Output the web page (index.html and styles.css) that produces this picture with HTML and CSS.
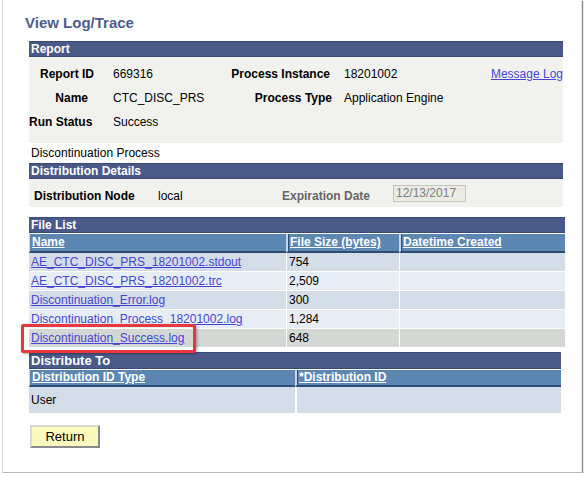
FILE: index.html
```html
<!DOCTYPE html>
<html>
<head>
<meta charset="utf-8">
<link rel="stylesheet" href="styles.css">
</head>
<body>
<div class="frame">
  <h1 class="title">View Log/Trace</h1>

  <section class="report">
    <div class="bar">Report</div>
    <div class="report-body">
      <div class="lbl l1">Report ID</div>
      <div class="val">669316</div>
      <div class="lbl l2">Process Instance</div>
      <div class="val">18201002</div>
      <div class="link-cell"><a href="#">Message Log</a></div>

      <div class="lbl l1 name">Name</div>
      <div class="val">CTC_DISC_PRS</div>
      <div class="lbl l2 ptype">Process Type</div>
      <div class="val">Application Engine</div>
      <div></div>

      <div class="lbl l1 rstat">Run Status</div>
      <div class="val">Success</div>
      <div></div><div></div><div></div>
    </div>
  </section>

  <div class="desc">Discontinuation Process</div>

  <section class="dist">
    <div class="bar">Distribution Details</div>
    <div class="dist-body">
      <span class="lbl dn">Distribution Node</span>
      <span class="val local">local</span>
      <span class="lbl exp">Expiration Date</span>
      <span class="datebox">12/13/2017</span>
    </div>
  </section>

  <section class="files">
    <div class="bar">File List</div>
    <div class="grid file-grid">
      <div class="th"><a href="#">Name</a></div>
      <div class="th"><a href="#">File Size (bytes)</a></div>
      <div class="th"><a href="#">Datetime Created</a></div>

      <div class="td dark"><a href="#">AE_CTC_DISC_PRS_18201002.stdout</a></div>
      <div class="td dark">754</div>
      <div class="td dark"></div>

      <div class="td light"><a href="#">AE_CTC_DISC_PRS_18201002.trc</a></div>
      <div class="td light">2,509</div>
      <div class="td light"></div>

      <div class="td dark"><a href="#">Discontinuation_Error.log</a></div>
      <div class="td dark">300</div>
      <div class="td dark"></div>

      <div class="td light"><a href="#">Discontinuation_Process_18201002.log</a></div>
      <div class="td light">1,284</div>
      <div class="td light"></div>

      <div class="td sel hl-cell"><a href="#">Discontinuation_Success.log</a><span class="hl-box"></span></div>
      <div class="td sel">648</div>
      <div class="td sel"></div>
    </div>
  </section>

  <section class="distto">
    <div class="bar">Distribute To</div>
    <div class="grid to-grid">
      <div class="th"><a href="#">Distribution ID Type</a></div>
      <div class="th"><a href="#">*Distribution ID</a></div>
      <div class="td dark tall">User</div>
      <div class="td dark tall"></div>
    </div>
  </section>

  <button class="btn" type="button">Return</button>
</div>
</body>
</html>
```

FILE: styles.css
```css
html, body {
  margin: 0;
  padding: 0;
  background: #ffffff;
}

body {
  font-family: "Liberation Sans", Arial, sans-serif;
  font-size: 12px;
  color: #000;
}

a {
  color: #4646d2;
  text-decoration: underline;
}

.frame {
  margin-left: 2px;
  width: 580px;
  height: 473px;
  box-sizing: border-box;
  border-left: 1px solid #d4d4d4;
  border-right: 1px solid #e0e0e0;
  border-bottom: 1px solid #b8b8b8;
  box-shadow: 1px 1px 1px #8a8a8a;
  padding: 14px 0 0 26px;
  position: relative;
}

.title {
  margin: 0 0 0 -4px;
  font-size: 15px;
  line-height: 18px;
  font-weight: bold;
  color: #4c5d8c;
  height: 18px;
}

.bar {
  background: #4a5a88;
  border: 1px solid #3b4a75;
  border-left: none;
  border-right: none;
  box-sizing: border-box;
  height: 16px;
  color: #fff;
  font-weight: bold;
  font-size: 12px;
  line-height: 14px;
  padding-left: 2px;
}

.report {
  margin-top: 9px;
  width: 534px;
}

.report-body {
  background: #f1f2ee;
  height: 86px;
  box-sizing: border-box;
  padding-top: 5px;
  display: grid;
  grid-template-columns: 84px 100px 131px 140px 1fr;
  grid-auto-rows: 24px;
  align-items: center;
}

.lbl {
  font-weight: bold;
}

.l1 {
  text-align: right;
  padding-right: 19px;
}

.l1.name {
  padding-right: 25px;
}

.l1.rstat {
  text-align: left;
  padding-right: 0;
  white-space: nowrap;
}

.l2 {
  text-align: right;
  padding-right: 14px;
}

.l2.ptype {
  padding-right: 12px;
}

.link-cell {
  text-align: right;
}

.desc {
  height: 20px;
  line-height: 20px;
  padding-left: 2px;
}

.dist {
  width: 534px;
}

.dist-body {
  background: #f1f2ee;
  height: 28px;
  box-sizing: border-box;
  padding-top: 6px;
  display: flex;
  align-items: flex-start;
}

.dist-body .lbl,
.dist-body .val {
  margin-top: 4px;
  line-height: 14px;
}

.dn {
  margin-left: 5px;
  width: 124px;
}

.local {
  width: 124px;
}

.exp {
  color: #666;
  width: 111px;
}

.datebox {
  display: inline-block;
  width: 73px;
  height: 17px;
  box-sizing: border-box;
  border: 1px solid #c4c4bc;
  background: #ebebe4;
  color: #808080;
  font-size: 12px;
  line-height: 15px;
  padding-left: 2px;
}

.files {
  margin-top: 10px;
  width: 536px;
}

.grid {
  display: grid;
  margin-top: 1px;
}

.file-grid {
  grid-template-columns: 257px 113px 1fr;
}

.to-grid {
  grid-template-columns: 266px 1fr;
  width: 532px;
}

.th {
  background: #5b87b2;
  height: 19px;
  box-sizing: border-box;
  border-left: 1px solid #c9d6e6;
  border-bottom: 2px solid #2e4a76;
  padding-left: 2px;
  line-height: 16px;
  font-weight: bold;
  white-space: nowrap;
}

.th + .th {
  border-left: 2px solid #c9d6e6;
  box-shadow: inset 1px 0 0 #2e4a76;
}

.th a {
  color: #fff;
}

.td {
  height: 19px;
  box-sizing: border-box;
  line-height: 18px;
  padding-left: 2px;
  border-bottom: 1px solid #fff;
  white-space: nowrap;
}

.td + .td {
  border-left: 1px solid #fff;
}

.td:nth-child(3n+1) {
  border-left: none;
}

.dark {
  background: #d3dde7;
}

.light {
  background: #e7edf5;
}

.sel {
  background: #d3d8d4;
  height: 18px;
  border-bottom: none;
}

.hl-cell {
  position: relative;
}

.hl-box {
  position: absolute;
  left: -8px;
  top: -5px;
  width: 175px;
  height: 29px;
  box-sizing: border-box;
  border: 3px solid #e8383e;
  border-radius: 2px;
  box-shadow: 1px 1px 3px rgba(0, 0, 0, 0.35);
  pointer-events: none;
}

.distto {
  margin-top: 5px;
  width: 532px;
}

.distto .bar {
  height: 17px;
  line-height: 15px;
  font-size: 13px;
}

.to-grid .th {
  height: 17px;
  line-height: 14px;
}

.tall {
  height: 26px;
  line-height: 26px;
  border-bottom: none;
}

.to-grid .td:nth-child(3n+1) {
  border-left: none;
}

.to-grid .td + .td {
  border-left: 2px solid #fff;
}

.btn {
  display: block;
  margin-top: 12px;
  margin-left: 1px;
  width: 70px;
  height: 23px;
  background: #fcf9bf;
  border: 2px solid;
  border-color: #d8d8d8 #8a8a8a #8a8a8a #d8d8d8;
  font-family: "Liberation Sans", Arial, sans-serif;
  font-size: 13px;
  color: #000;
  padding: 0;
}
```
